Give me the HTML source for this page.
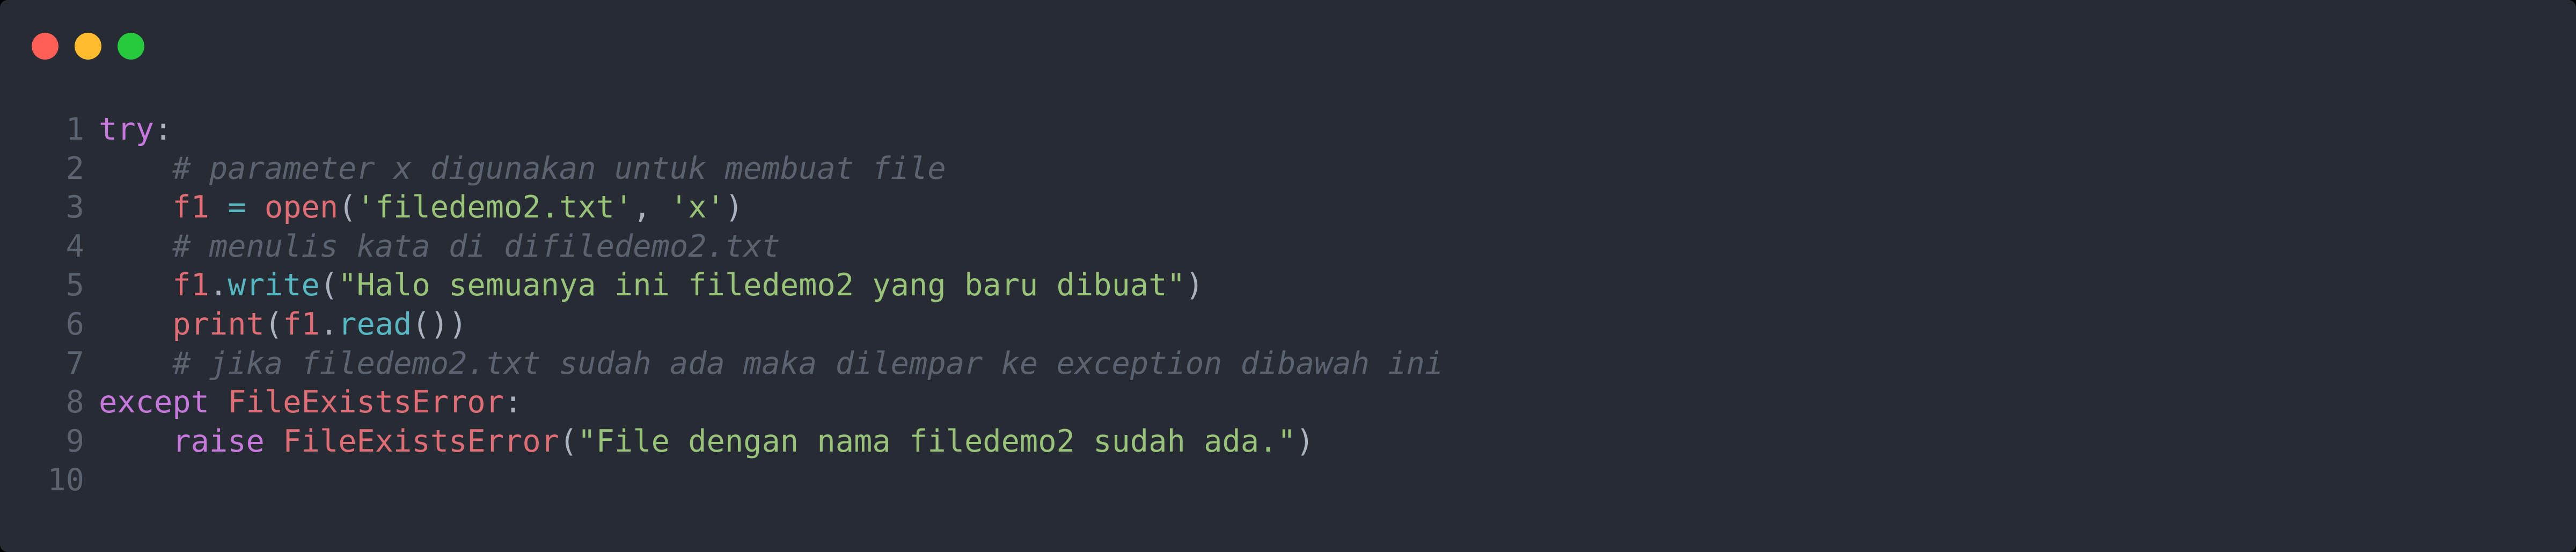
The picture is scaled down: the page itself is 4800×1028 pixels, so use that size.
<!DOCTYPE html>
<html><head><meta charset="utf-8"><style>
html,body{margin:0;padding:0;background:#000;}
body{width:4800px;height:1028px;overflow:hidden;position:relative;}
.win{position:absolute;left:0;top:0;width:4800px;height:1028px;background:#272b34;border-radius:14px;}
.dot{position:absolute;top:61px;width:50px;height:50px;border-radius:50%;}
pre{position:absolute;left:0;top:205px;margin:0;font-family:"DejaVu Sans Mono","Liberation Mono",monospace;font-size:57px;line-height:72.6px;color:#abb2bf;}
.ln{display:inline-block;width:157px;text-align:right;color:#5c6370;margin-right:27px;}
.k{color:#c678dd}.c{color:#5c6370;font-style:italic}.s{color:#98c379}.r{color:#e06c75}.f{color:#56b6c2}.p{color:#abb2bf}
</style></head><body><div class="win">
<div class="dot" style="left:59px;background:#ff5f56"></div>
<div class="dot" style="left:139px;background:#ffbd2e"></div>
<div class="dot" style="left:219px;background:#27c93f"></div>
<pre><span class="ln">1</span><span class="k">try</span>:
<span class="ln">2</span>    <span class="c"># parameter x digunakan untuk membuat file</span>
<span class="ln">3</span>    <span class="r">f1</span> <span class="f">=</span> <span class="r">open</span>(<span class="s">'filedemo2.txt'</span>, <span class="s">'x'</span>)
<span class="ln">4</span>    <span class="c"># menulis kata di difiledemo2.txt</span>
<span class="ln">5</span>    <span class="r">f1</span>.<span class="f">write</span>(<span class="s">"Halo semuanya ini filedemo2 yang baru dibuat"</span>)
<span class="ln">6</span>    <span class="r">print</span>(<span class="r">f1</span>.<span class="f">read</span>())
<span class="ln">7</span>    <span class="c"># jika filedemo2.txt sudah ada maka dilempar ke exception dibawah ini</span>
<span class="ln">8</span><span class="k">except</span> <span class="r">FileExistsError</span>:
<span class="ln">9</span>    <span class="k">raise</span> <span class="r">FileExistsError</span>(<span class="s">"File dengan nama filedemo2 sudah ada."</span>)
<span class="ln">10</span>
</pre></div></body></html>
